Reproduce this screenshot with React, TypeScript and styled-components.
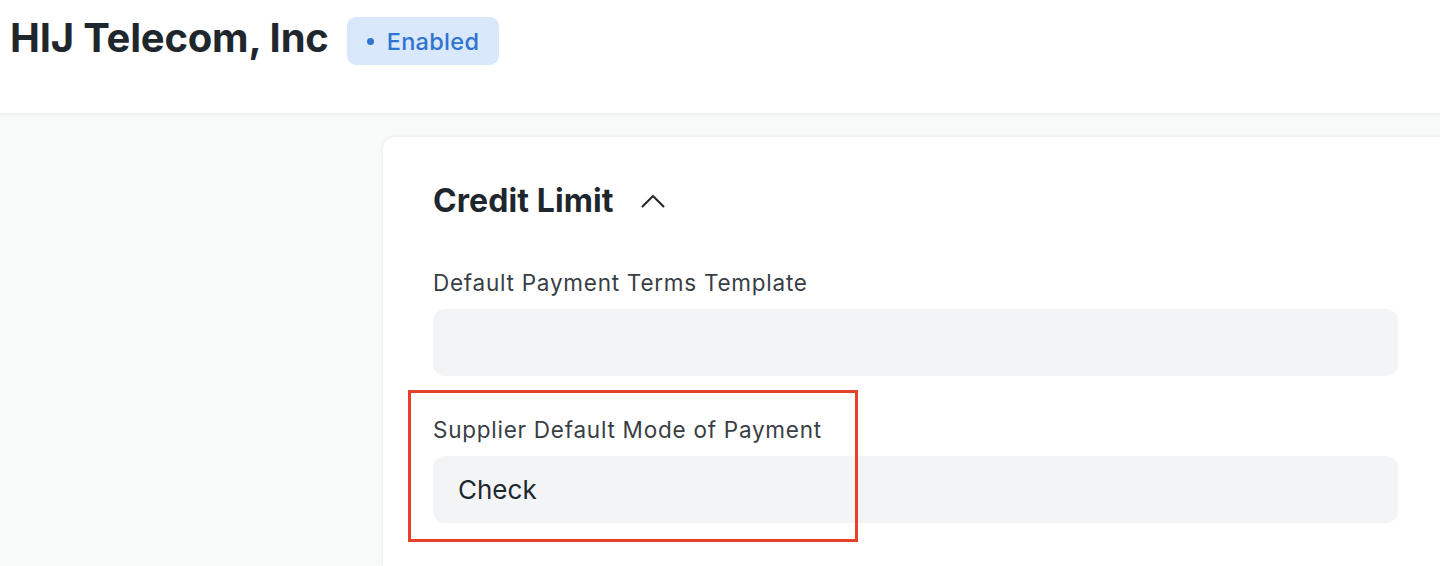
import React from 'react'
import styled, { createGlobalStyle } from 'styled-components'

const GlobalStyle = createGlobalStyle`
  html, body {
    margin: 0;
    padding: 0;
    background: #f8f9f9;
    font-family: Inter, "Noto Sans", sans-serif;
    -webkit-font-smoothing: antialiased;
  }
`

const Page = styled.div`
  width: 1440px;
  height: 566px;
  overflow: hidden;
  display: flex;
  flex-direction: column;
`

const Header = styled.header`
  height: 113px;
  flex-shrink: 0;
  background: #ffffff;
  box-shadow: 0 1px 3px rgba(0, 0, 0, 0.08);
  position: relative;
  z-index: 1;
  display: flex;
  align-items: flex-start;
  padding: 17px 0 0 10px;
  box-sizing: border-box;
  gap: 18px;
`

const Title = styled.h1`
  margin: 0;
  font-size: 40px;
  line-height: 42px;
  font-weight: 700;
  color: #1f272e;
  letter-spacing: -0.2px;
`

const Badge = styled.div`
  height: 48px;
  padding: 0 20px 0 20px;
  border-radius: 9px;
  background: #d9e8fb;
  color: #2f74d0;
  display: flex;
  align-items: center;
  gap: 13px;
  font-size: 23.5px;
  font-weight: 500;
  letter-spacing: 0.3px;
`

const Dot = styled.span`
  width: 7px;
  height: 7px;
  border-radius: 50%;
  background: #2f74d0;
`

const Body = styled.main`
  flex: 1;
  padding: 24px 0 0 383px;
  display: flex;
`

const Card = styled.section`
  flex: 1;
  background: #ffffff;
  border-radius: 12px 0 0 0;
  box-shadow: 0 0 4px rgba(0, 0, 0, 0.08);
  padding: 46px 42px 0 50px;
`

const SectionHead = styled.div`
  display: flex;
  align-items: center;
  gap: 27px;
  margin-bottom: 50px;
`

const SectionTitle = styled.h2`
  margin: 0;
  font-size: 32px;
  line-height: 36px;
  font-weight: 700;
  color: #1f272e;
  letter-spacing: 0.1px;
`

const Field = styled.div`
  position: relative;
  margin-bottom: 40px;
`

const Label = styled.label`
  display: block;
  font-size: 22.5px;
  line-height: 28px;
  color: #383e45;
  letter-spacing: 0.75px;
  margin-bottom: 12px;
`

const Input = styled.div`
  height: 67px;
  border-radius: 12px;
  background: #f3f4f6;
  display: flex;
  align-items: center;
  padding: 0 25px;
  font-size: 26px;
  color: #1f272e;
  letter-spacing: 0px;
`

const Highlight = styled.div`
  position: absolute;
  left: -25px;
  top: -26px;
  width: 450px;
  height: 152px;
  box-sizing: border-box;
  border: 3px solid #e8412a;
  pointer-events: none;
`

const ChevronUp = () => (
  <svg width="24" height="14" viewBox="0 0 24 14" fill="none">
    <path d="M1.5 12.5L12 2L22.5 12.5" stroke="#1f272e" strokeWidth="2" strokeLinecap="round" strokeLinejoin="round" />
  </svg>
)

const App: React.FC = () => {
  return (
    <Page>
      <GlobalStyle />
      <Header>
        <Title>HIJ Telecom, Inc</Title>
        <Badge>
          <Dot />
          Enabled
        </Badge>
      </Header>
      <Body>
        <Card>
          <SectionHead>
            <SectionTitle>Credit Limit</SectionTitle>
            <ChevronUp />
          </SectionHead>
          <Field>
            <Label>Default Payment Terms Template</Label>
            <Input />
          </Field>
          <Field>
            <Label>Supplier Default Mode of Payment</Label>
            <Input>Check</Input>
            <Highlight />
          </Field>
        </Card>
      </Body>
    </Page>
  )
}

export default App
